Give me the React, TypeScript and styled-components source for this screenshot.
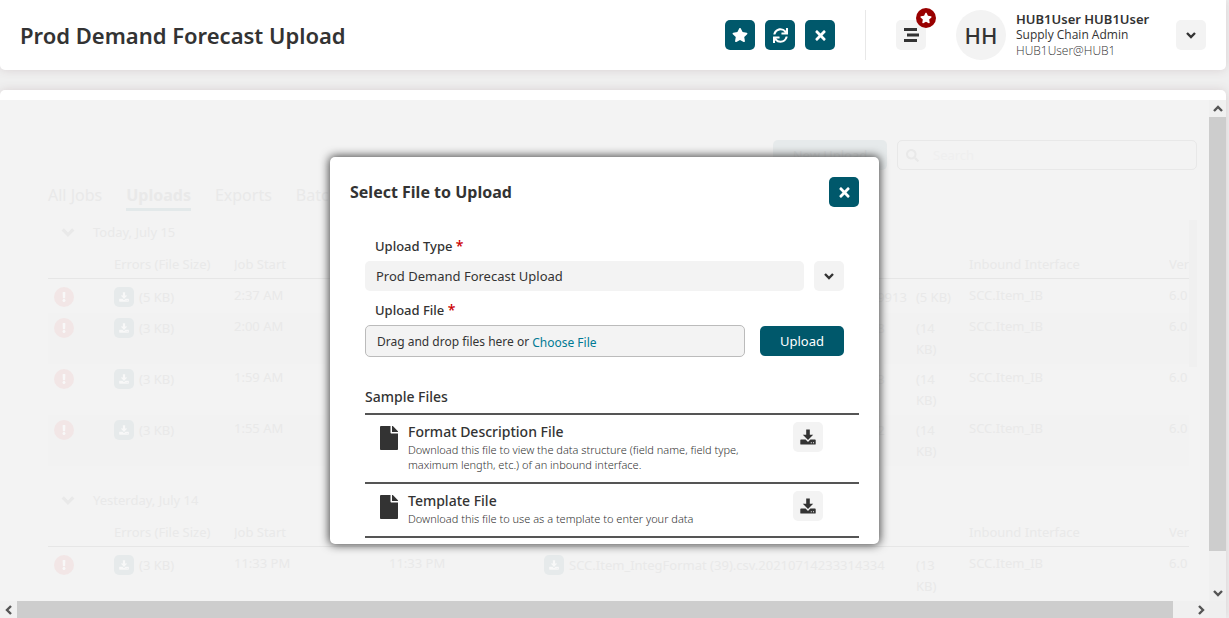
import React, { useRef } from 'react';
import styled, { createGlobalStyle, css } from 'styled-components';
import { FaStar, FaSync, FaTimes, FaExclamation, FaSearch, FaFile } from 'react-icons/fa';

const teal = '#00586b';
const ink = '#333333';
const faded = '#e9e9e9';
const fadedTeal = '#e6eaeb';

const GlobalStyle = createGlobalStyle`
  * { box-sizing: border-box; }
  body {
    margin: 0;
    background: #efefef;
    color: ${ink};
    font-family: "Noto Sans", "Open Sans", sans-serif;
    font-size: 13px;
  }
  button, input, select { font: inherit; color: inherit; }
  button { cursor: pointer; }
`;

const Page = styled.div`
  display: flex;
  flex-direction: column;
  gap: 20px;
  height: 100vh;
  padding-right: 3px;
  overflow: hidden;
`;

const Header = styled.header`
  display: flex;
  align-items: center;
  flex: none;
  height: 70px;
  padding: 0 20px;
  background: #fff;
  border-radius: 0 0 5px 5px;
  box-shadow: 0 0 10px #d8d0d2;
`;

const PageTitle = styled.h1`
  flex: 1;
  margin: 0;
  font-size: 22px;
  line-height: 30px;
  font-weight: 600;
  white-space: nowrap;
`;

const Actions = styled.div`
  display: flex;
  gap: 10px;
  padding-right: 30px;
`;

const IconButton = styled.button<{ $tone?: 'teal' | 'light' }>`
  position: relative;
  display: flex;
  align-items: center;
  justify-content: center;
  flex: none;
  width: 30px;
  height: 30px;
  padding: 0;
  border: 0;
  border-radius: 5px;
  ${({ $tone }) =>
    $tone === 'teal'
      ? css`background: ${teal}; color: #fff;`
      : css`background: #f3f3f3; color: ${ink};`}
`;

const Account = styled.div`
  display: flex;
  align-items: center;
  gap: 30px;
  height: 50px;
  padding-left: 30px;
  border-left: 1px solid #e8e8e8;
`;

const Badge = styled.span`
  position: absolute;
  top: -12px;
  right: -10px;
  display: flex;
  align-items: center;
  justify-content: center;
  width: 20px;
  height: 20px;
  border-radius: 50%;
  background: #990000;
  color: #fff;
`;

const User = styled.div`
  display: flex;
  align-items: center;
  gap: 10px;
`;

const Avatar = styled.div`
  display: flex;
  align-items: center;
  justify-content: center;
  width: 50px;
  height: 50px;
  border-radius: 50%;
  background: #f3f3f3;
  font-size: 22px;
  font-weight: 500;
`;

const UserText = styled.div`
  width: 130px;
  font-family: "Open Sans", "Noto Sans", sans-serif;
  font-size: 12px;
  line-height: 16px;
  white-space: nowrap;
`;

const UserName = styled.div`
  font-family: "Noto Sans", sans-serif;
  font-size: 13px;
  font-weight: 600;
`;

const UserLogin = styled.div`
  font-weight: 300;
`;

const Panel = styled.main`
  display: flex;
  flex-direction: column;
  flex: 1;
  min-height: 0;
  padding-top: 10px;
  background: #fff;
  border-radius: 5px 5px 0 0;
  box-shadow: 0 0 10px #d8d0d2;
`;

const Scroller = styled.div`
  display: grid;
  grid-template-columns: minmax(0, 1fr) 17px;
  grid-template-rows: minmax(0, 1fr) 17px;
  flex: 1;
  min-height: 0;
  background: #efefef;
`;

const View = styled.div`
  position: relative;
  overflow: hidden;
  background: #f3f3f3;
`;

const ScrollBar = styled.div<{ $vertical?: boolean }>`
  display: flex;
  flex-direction: ${({ $vertical }) => ($vertical ? 'column' : 'row')};
  background: #f0f0f0;
`;

const ScrollArrow = styled.button`
  display: flex;
  align-items: center;
  justify-content: center;
  flex: none;
  width: 17px;
  height: 17px;
  padding: 0;
  border: 0;
  background: none;
  color: #555;
`;

const Thumb = styled.div<{ $grow: number }>`
  flex: ${({ $grow }) => $grow};
  background: #cdcdcd;
`;

const Track = styled.div<{ $grow: number }>`
  flex: ${({ $grow }) => $grow};
`;

const Jobs = styled.section`
  display: flex;
  flex-direction: column;
  padding: 40px 12px 0 48px;
  color: ${faded};
`;

const Toolbar = styled.div`
  display: flex;
  justify-content: flex-end;
  gap: 10px;
`;

const NewUpload = styled.button`
  width: 114px;
  height: 30px;
  border: 0;
  border-radius: 5px;
  background: ${fadedTeal};
  color: #dde1e2;
`;

const SearchBox = styled.label`
  display: flex;
  align-items: center;
  gap: 10px;
  width: 300px;
  height: 30px;
  padding: 0 8px;
  border: 1px solid #e8e8e8;
  border-radius: 5px;
`;

const SearchInput = styled.input`
  flex: 1;
  min-width: 0;
  padding: 0 4px;
  border: 0;
  outline: 0;
  background: none;
  &::placeholder { color: #efefef; opacity: 1; }
`;

const Tabs = styled.nav`
  display: flex;
  gap: 24px;
  padding: 14px 0 9px;
`;

const Tab = styled.a<{ $active?: boolean }>`
  padding-bottom: 2px;
  border-bottom: 3px solid ${({ $active }) => ($active ? '#e3e9ea' : 'transparent')};
  color: inherit;
  font-size: 16px;
  line-height: 22px;
  font-weight: ${({ $active }) => ($active ? 700 : 400)};
  text-decoration: none;
  white-space: nowrap;
`;

const JobList = styled.div`
  display: flex;
  align-items: flex-start;
`;

const Groups = styled.div`
  display: flex;
  flex-direction: column;
  gap: 22px;
  flex: 1;
  min-width: 0;
`;

const ListThumb = styled.div`
  width: 8px;
  height: 147px;
  background: #f0f0f0;
`;

const GroupTitle = styled.h2`
  display: flex;
  align-items: center;
  gap: 17px;
  height: 25px;
  margin: 0;
  padding: 0 0 2px 12px;
  font-size: 13px;
  font-weight: 400;
`;

const JobTable = styled.table`
  width: 100%;
  table-layout: fixed;
  border-collapse: separate;
  border-spacing: 0;
`;

const Th = styled.th`
  height: 34px;
  padding: 9px 0 3px;
  border-bottom: 1px solid #e6e6e6;
  font-weight: 400;
  line-height: 21px;
  text-align: left;
  white-space: nowrap;
  overflow: hidden;
`;

const Row = styled.tr`
  &:nth-child(even) td { background: #f2f2f2; }
  &:first-child td { padding-top: 8px; padding-bottom: 5px; }
`;

const Td = styled.td`
  padding: 5px 0 4px;
  vertical-align: top;
  line-height: 16px;
  white-space: nowrap;
`;

const FileCell = styled.div`
  display: flex;
  gap: 5px;
  line-height: 21px;
`;

const FileName = styled.span`
  min-width: 320px;
`;

const FileSize = styled.span<{ $wrap: boolean }>`
  margin-left: ${({ $wrap }) => ($wrap ? '22px' : '4px')};
  width: ${({ $wrap }) => ($wrap ? '30px' : 'auto')};
  white-space: ${({ $wrap }) => ($wrap ? 'normal' : 'nowrap')};
`;

const ErrorDot = styled.span`
  display: flex;
  align-items: center;
  justify-content: center;
  width: 20px;
  height: 20px;
  margin-left: 6px;
  border-radius: 50%;
  background: #f2e6e6;
  color: #f8f8f8;
`;

const MiniButton = styled.button`
  display: flex;
  align-items: center;
  justify-content: center;
  flex: none;
  width: 20px;
  height: 20px;
  padding: 0;
  border: 0;
  border-radius: 5px;
  background: ${fadedTeal};
  color: #f8f8f8;
`;

const Overlay = styled.div`
  position: absolute;
  inset: 0;
  display: flex;
  align-items: center;
  justify-content: center;
`;

const Dialog = styled.div`
  width: 549px;
  padding: 20px 20px 6px;
  border-radius: 5px;
  background: #fff;
  box-shadow: 0 0 10px 1px #444;
`;

const DialogHead = styled.div`
  display: flex;
  align-items: center;
  justify-content: space-between;
`;

const DialogTitle = styled.h2`
  margin: 0;
  font-size: 16px;
  line-height: 22px;
  font-weight: 700;
`;

const Form = styled.form`
  display: flex;
  flex-direction: column;
  padding: 29px 15px 0;
`;

const FieldLabel = styled.label`
  margin-bottom: 5px;
  padding: 0 10px;
  font-weight: 500;
  line-height: 20px;
`;

const Required = styled.span`
  color: #cc0000;
  font-size: 14px;
`;

const FieldRow = styled.div<{ $gap: number }>`
  display: flex;
  align-items: center;
  gap: ${({ $gap }) => $gap}px;
  &:not(:last-child) { margin-bottom: 9px; }
`;

const TypeSelect = styled.select`
  appearance: none;
  flex: 1;
  height: 30px;
  padding: 0 11px;
  border: 0;
  border-radius: 5px;
  background: #f3f3f3;
`;

const DropZone = styled.div`
  display: flex;
  align-items: center;
  gap: 3px;
  flex: 1;
  height: 32px;
  padding: 0 11px;
  border: 1px solid #bbb;
  border-radius: 5px;
  background: #f3f3f3;
  font-size: 12px;
`;

const ChooseFile = styled.button`
  padding: 2px 0 0;
  border: 0;
  background: none;
  color: #007a94;
`;

const UploadButton = styled.button`
  width: 84px;
  height: 30px;
  border: 0;
  border-radius: 5px;
  background: ${teal};
  color: #fff;
`;

const Samples = styled.section`
  padding: 30px 0 0 15px;
`;

const SamplesTitle = styled.h3`
  margin: 0;
  padding-bottom: 6px;
  border-bottom: 2px solid #555;
  font-size: 14px;
  line-height: 20px;
  font-weight: 500;
`;

const Sample = styled.div`
  display: flex;
  align-items: flex-start;
  gap: 10px;
  padding: 7px 36px 9px 15px;
  border-bottom: 2px solid #555;
`;

const FileGlyph = styled(FaFile)`
  flex: none;
  width: 18px;
  height: 24px;
  margin-top: 4px;
`;

const SampleText = styled.div`
  flex: 1;
`;

const SampleName = styled.h4`
  margin: 0;
  font-size: 14px;
  line-height: 20px;
  font-weight: 500;
`;

const SampleNote = styled.p`
  margin: 0 0 1px;
  padding-right: 20px;
  font-size: 11px;
  line-height: 15px;
  font-weight: 300;
`;

const rotation = { down: 0, left: 90, up: 180, right: 270 };

const Chevron = ({ size, dir = 'down' }: { size: number; dir?: keyof typeof rotation }) => (
  <svg width={size} height={size} viewBox="0 0 12 12" aria-hidden="true">
    <path
      d="M2 4 L6 8 L10 4"
      fill="none"
      stroke="currentColor"
      strokeWidth="2.4"
      transform={`rotate(${rotation[dir]} 6 6)`}
    />
  </svg>
);

const DownloadIcon = ({ size }: { size: number }) => (
  <svg width={size} height={size} viewBox="0 0 16 16" fill="currentColor" aria-hidden="true">
    <path d="M6.2 0.5h3.6v5.2h3.4L8 11 2.8 5.7h3.4z" />
    <path
      fillRule="evenodd"
      d="M1 10.6h4.6L8 13l2.4-2.4H15a.7.7 0 0 1 .7.7v3.6a.7.7 0 0 1-.7.7H1a.7.7 0 0 1-.7-.7v-3.6a.7.7 0 0 1 .7-.7zM10.8 13.3v1h1v-1zM13 13.3v1h1v-1z"
    />
  </svg>
);

const MenuIcon = () => (
  <svg width="16" height="14" viewBox="0 0 16 14" fill="currentColor" aria-hidden="true">
    <path d="M1 0h13v3H1zM4 5.5h12v3H4zM1 11h13v3H1z" />
  </svg>
);

type Job = { error: string; start: string; end?: string; file: string; size: string; wrap: boolean };

const groups: { title: string; jobs: Job[] }[] = [
  {
    title: 'Today, July 15',
    jobs: [
      { error: '(5 KB)', start: '2:37 AM', file: 'SCC.Item_IntegFormat (39a).csv.2021071502371999913', size: '(5 KB)', wrap: false },
      { error: '(3 KB)', start: '2:00 AM', file: 'SCC.Item_IntegFormat (39).csv.20210715020014338', size: '(14 KB)', wrap: true },
      { error: '(3 KB)', start: '1:59 AM', file: 'SCC.Item_IntegFormat (39).csv.20210715015914333', size: '(14 KB)', wrap: true },
      { error: '(3 KB)', start: '1:55 AM', file: 'SCC.Item_IntegFormat (39).csv.20210715015514332', size: '(14 KB)', wrap: true },
    ],
  },
  {
    title: 'Yesterday, July 14',
    jobs: [
      { error: '(3 KB)', start: '11:33 PM', end: '11:33 PM', file: 'SCC.Item_IntegFormat (39).csv.20210714233314334', size: '(13 KB)', wrap: true },
    ],
  },
];

const columns: { id: string; label?: string; width?: number }[] = [
  { id: 'status', width: 66 },
  { id: 'errors', label: 'Errors (File Size)', width: 120 },
  { id: 'start', label: 'Job Start', width: 155 },
  { id: 'end', width: 155 },
  { id: 'file' },
  { id: 'interface', label: 'Inbound Interface', width: 200 },
  { id: 'version', label: 'Ver', width: 20 },
];

const samples = [
  {
    name: 'Format Description File',
    note: 'Download this file to view the data structure (field name, field type, maximum length, etc.) of an inbound interface.',
  },
  { name: 'Template File', note: 'Download this file to use as a template to enter your data' },
];

const tabs = ['All Jobs', 'Uploads', 'Exports', 'Batch'];

function JobGroup({ title, jobs }: { title: string; jobs: Job[] }) {
  return (
    <div>
      <GroupTitle>
        <Chevron size={16} />
        {title}
      </GroupTitle>
      <JobTable>
        <colgroup>
          {columns.map((c) => (
            <col key={c.id} width={c.width} />
          ))}
        </colgroup>
        <thead>
          <tr>
            {columns.map((c) => (
              <Th key={c.id}>{c.label}</Th>
            ))}
          </tr>
        </thead>
        <tbody>
          {jobs.map((job) => (
            <Row key={job.start}>
              <Td>
                <ErrorDot><FaExclamation size={10} /></ErrorDot>
              </Td>
              <Td>
                <FileCell>
                  <MiniButton aria-label="Download errors"><DownloadIcon size={10} /></MiniButton>
                  {job.error}
                </FileCell>
              </Td>
              <Td>{job.start}</Td>
              <Td>{job.end}</Td>
              <Td>
                <FileCell>
                  <MiniButton aria-label="Download file"><DownloadIcon size={10} /></MiniButton>
                  <FileName>{job.file}</FileName>
                  <FileSize $wrap={job.wrap}>{job.size}</FileSize>
                </FileCell>
              </Td>
              <Td>SCC.Item_IB</Td>
              <Td>6.0</Td>
            </Row>
          ))}
        </tbody>
      </JobTable>
    </div>
  );
}

function UploadDialog() {
  const fileInput = useRef<HTMLInputElement>(null);
  return (
    <Dialog role="dialog" aria-labelledby="upload-title">
      <DialogHead>
        <DialogTitle id="upload-title">Select File to Upload</DialogTitle>
        <IconButton $tone="teal" aria-label="Close dialog"><FaTimes size={15} /></IconButton>
      </DialogHead>
      <Form onSubmit={(e) => e.preventDefault()}>
        <FieldLabel htmlFor="upload-type">Upload Type <Required>*</Required></FieldLabel>
        <FieldRow $gap={10}>
          <TypeSelect id="upload-type">
            <option>Prod Demand Forecast Upload</option>
          </TypeSelect>
          <IconButton type="button" aria-label="Show upload types"><Chevron size={12} /></IconButton>
        </FieldRow>
        <FieldLabel htmlFor="upload-file">Upload File <Required>*</Required></FieldLabel>
        <FieldRow $gap={15}>
          <DropZone>
            Drag and drop files here or
            <ChooseFile type="button" onClick={() => fileInput.current?.click()}>Choose File</ChooseFile>
            <input id="upload-file" type="file" ref={fileInput} hidden />
          </DropZone>
          <UploadButton type="submit">Upload</UploadButton>
        </FieldRow>
      </Form>
      <Samples>
        <SamplesTitle>Sample Files</SamplesTitle>
        {samples.map((s) => (
          <Sample key={s.name}>
            <FileGlyph />
            <SampleText>
              <SampleName>{s.name}</SampleName>
              <SampleNote>{s.note}</SampleNote>
            </SampleText>
            <IconButton aria-label={`Download ${s.name}`}><DownloadIcon size={16} /></IconButton>
          </Sample>
        ))}
      </Samples>
    </Dialog>
  );
}

export default function App() {
  return (
    <Page>
      <GlobalStyle />
      <Header>
        <PageTitle>Prod Demand Forecast Upload</PageTitle>
        <Actions>
          <IconButton $tone="teal" aria-label="Favorite"><FaStar size={16} /></IconButton>
          <IconButton $tone="teal" aria-label="Refresh"><FaSync size={15} /></IconButton>
          <IconButton $tone="teal" aria-label="Close"><FaTimes size={15} /></IconButton>
        </Actions>
        <Account>
          <IconButton aria-label="Menu">
            <MenuIcon />
            <Badge><FaStar size={12} /></Badge>
          </IconButton>
          <User>
            <Avatar>HH</Avatar>
            <UserText>
              <UserName>HUB1User HUB1User</UserName>
              <div>Supply Chain Admin</div>
              <UserLogin>HUB1User@HUB1</UserLogin>
            </UserText>
          </User>
          <IconButton aria-label="Account options"><Chevron size={12} /></IconButton>
        </Account>
      </Header>
      <Panel>
        <Scroller>
          <View>
            <Jobs>
              <Toolbar>
                <NewUpload>New Upload</NewUpload>
                <SearchBox>
                  <FaSearch size={13} />
                  <SearchInput type="text" placeholder="Search" aria-label="Search" />
                </SearchBox>
              </Toolbar>
              <Tabs>
                {tabs.map((t) => (
                  <Tab key={t} href="#" $active={t === 'Uploads'}>{t}</Tab>
                ))}
              </Tabs>
              <JobList>
                <Groups>
                  {groups.map((g) => (
                    <JobGroup key={g.title} {...g} />
                  ))}
                </Groups>
                <ListThumb />
              </JobList>
            </Jobs>
            <Overlay>
              <UploadDialog />
            </Overlay>
          </View>
          <ScrollBar $vertical>
            <ScrollArrow aria-label="Scroll up"><Chevron size={12} dir="up" /></ScrollArrow>
            <Thumb $grow={434} />
            <Track $grow={33} />
            <ScrollArrow aria-label="Scroll down"><Chevron size={12} /></ScrollArrow>
          </ScrollBar>
          <ScrollBar>
            <ScrollArrow aria-label="Scroll left"><Chevron size={12} dir="left" /></ScrollArrow>
            <Thumb $grow={1156} />
            <Track $grow={19} />
            <ScrollArrow aria-label="Scroll right"><Chevron size={12} dir="right" /></ScrollArrow>
          </ScrollBar>
        </Scroller>
      </Panel>
    </Page>
  );
}
